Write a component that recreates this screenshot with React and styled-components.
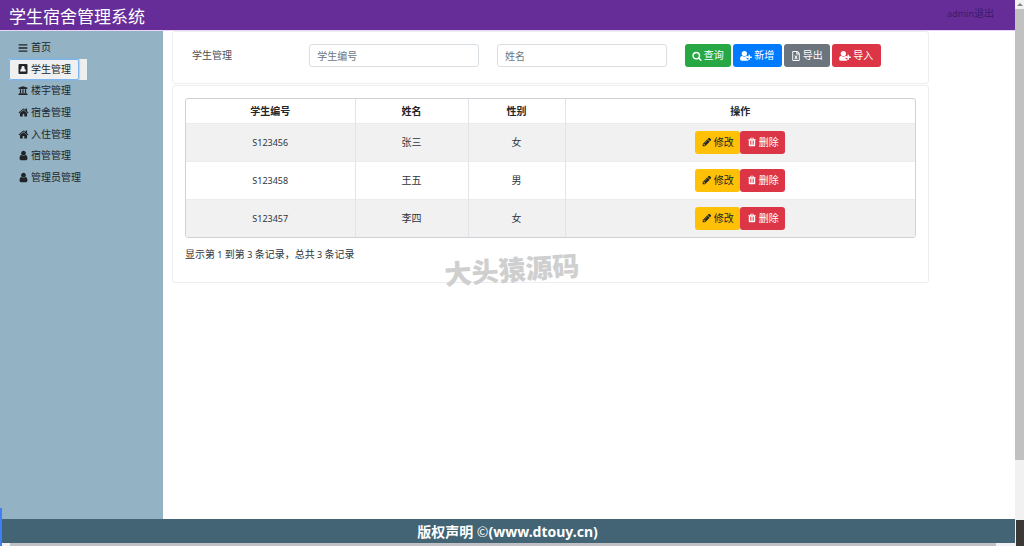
import React from "react";
import styled, { createGlobalStyle, css } from "styled-components";
import { FaBars, FaUniversity, FaRegFileExcel } from "react-icons/fa";

const GlobalStyle = createGlobalStyle`
  *, *::before, *::after { box-sizing: border-box; }
  body {
    margin: 0;
    background: #fff;
    color: #212529;
    font-family: "Noto Sans", "Noto Sans CJK SC", sans-serif;
    font-size: 10px;
    line-height: 15px;
  }
  button, input { font: inherit; }
`;

/* ---------- icons ---------- */

const Svg = styled.svg`
  width: ${(p) => p.$size || 10}px;
  height: ${(p) => p.$size || 10}px;
  fill: currentColor;
  flex: none;
`;

const glyph = (d) =>
  function Glyph({ size }) {
    return (
      <Svg viewBox="0 0 1792 1792" $size={size} aria-hidden="true">
        <path d={d} />
      </Svg>
    );
  };

const HomeIcon = glyph(
  "M1472 992v480q0 26-19 45t-45 19h-384v-384h-256v384h-384q-26 0-45-19t-19-45v-480q0-1 .5-3t.5-3l575-474 575 474q1 2 1 6zm223-69l-62 74q-8 9-21 11h-3q-13 0-21-7l-692-577-692 577q-12 8-24 7-13-2-21-11l-62-74q-8-10-7-23.5t11-21.5l719-599q32-26 76-26t76 26l244 204v-195q0-14 9-23t23-9h192q14 0 23 9t9 23v408l219 182q10 8 11 21.5t-7 23.5z"
);
const UserIcon = glyph(
  "M1536 1399q0 109-62.5 187t-150.5 78h-854q-88 0-150.5-78t-62.5-187q0-85 8.5-160.5t31.5-152 58.5-131 94-89 134.5-34.5q131 128 313 128t313-128q76 0 134.5 34.5t94 89 58.5 131 31.5 152 8.5 160.5zm-256-887q0 159-112.5 271.5t-271.5 112.5-271.5-112.5-112.5-271.5 112.5-271.5 271.5-112.5 271.5 112.5 112.5 271.5z"
);
const SearchIcon = glyph(
  "M1216 832q0-185-131.5-316.5t-316.5-131.5-316.5 131.5-131.5 316.5 131.5 316.5 316.5 131.5 316.5-131.5 131.5-316.5zm512 832q0 52-38 90t-90 38q-54 0-90-38l-343-342q-179 124-399 124-143 0-273.5-55.5t-225-150-150-225-55.5-273.5 55.5-273.5 150-225 225-150 273.5-55.5 273.5 55.5 225 150 150 225 55.5 273.5q0 220-124 399l343 343q37 37 37 90z"
);
const PencilIcon = glyph(
  "M491 1536l91-91-235-235-91 91v107h128v128h107zm523-928q0-22-22-22-10 0-17 7l-542 542q-7 7-7 17 0 22 22 22 10 0 17-7l542-542q7-7 7-17zm-54-192l416 416-832 832h-416v-416zm683 96q0 53-37 90l-166 166-416-416 166-165q36-38 90-38 53 0 91 38l235 234q37 39 37 91z"
);
const TrashIcon = glyph(
  "M704 1376v-704q0-14-9-23t-23-9h-64q-14 0-23 9t-9 23v704q0 14 9 23t23 9h64q14 0 23-9t9-23zm256 0v-704q0-14-9-23t-23-9h-64q-14 0-23 9t-9 23v704q0 14 9 23t23 9h64q14 0 23-9t9-23zm256 0v-704q0-14-9-23t-23-9h-64q-14 0-23 9t-9 23v704q0 14 9 23t23 9h64q14 0 23-9t9-23zm-544-992h448l-48-117q-7-9-17-11h-317q-10 2-17 11zm928 32v64q0 14-9 23t-23 9h-96v948q0 83-47 143.5t-113 60.5h-832q-66 0-113-58.5t-47-141.5v-952h-96q-14 0-23-9t-9-23v-64q0-14 9-23t23-9h309l70-167q15-37 54-63t79-26h320q40 0 79 26t54 63l70 167h309q14 0 23 9t9 23z"
);

const UserPlusIcon = ({ size = 12 }) => (
  <Svg viewBox="0 0 22 20" $size={size} aria-hidden="true">
    <circle cx="8" cy="5.500" r="4.800" />
    <path d="M4 9.500q4 3.500 8 0 1.500 0 2.200 1v1.500h-2v4h3.500v1.500q-1 1-2.500 1h-10q-3.200 0-3.200-3.500 0-5 4-5.500z" />
    <path d="M15.500 7.500h2.800v3.300h3.300v2.800h-3.300v3.300h-2.800v-3.300h-3.300v-2.800h3.300z" />
  </Svg>
);

const BadgeIcon = ({ size }) => (
  <Svg viewBox="0 0 20 20" $size={size} aria-hidden="true">
    <path
      fillRule="evenodd"
      d="M3 0h14q2 0 2 2v16q0 2-2 2h-14q-2 0-2-2v-16q0-2 2-2zM10 4a3.200 3.200 0 0 0-2.600 5.200q-2.900.8-2.900 4v2h11v-2q0-3.200-2.900-4a3.200 3.200 0 0 0-2.600-5.200z"
    />
  </Svg>
);

/* ---------- frame ---------- */

const Screen = styled.div`
  position: relative;
  display: grid;
  grid-template-columns: minmax(0, 1fr) 9px;
  min-height: 100vh;
`;

const Page = styled.div`
  display: flex;
  flex-direction: column;
`;

const Header = styled.header`
  display: flex;
  justify-content: space-between;
  height: 31px;
  padding: 0 21px 0 9px;
  background: #662d99;
  border-bottom: 1px solid #e9d5f5;
`;

const Title = styled.h1`
  margin: 0;
  color: #fff;
  font-size: 17px;
  font-weight: 400;
  line-height: 33px;
`;

const Account = styled.div`
  color: #3c1c66;
  line-height: 27px;
`;

const Logout = styled.a`
  color: inherit;
  text-decoration: none;
`;

const Body = styled.div`
  flex: 1;
  display: flex;
`;

const Sidebar = styled.nav`
  width: 163px;
  padding: 6px 0 0 9px;
  background: #93b2c3;
`;

const Menu = styled.ul`
  display: grid;
  grid-template-columns: minmax(0, 1fr);
  grid-auto-rows: 1fr;
  width: 78px;
  height: 151px;
  margin: 0;
  padding: 0;
  list-style: none;
`;

const MenuItem = styled.li`
  display: flex;
  background: ${(p) => (p.$active ? "#efefef" : "transparent")};
`;

const MenuLink = styled.a`
  display: flex;
  flex: none;
  align-items: center;
  gap: 3px;
  padding: 0 7px 0 8px;
  border: 1px solid transparent;
  border-radius: 2px;
  color: #212529;
  text-decoration: none;
  white-space: nowrap;
  ${(p) =>
    p.$active &&
    css`
      background: #f0f0f0;
      border-color: #80b5ec;
      box-shadow: 0 0 1px 1px rgba(128, 181, 236, 0.5);
    `}
`;

const IconSlot = styled.span`
  display: flex;
  justify-content: center;
  width: 10px;
`;

const Main = styled.main`
  flex: 1;
  display: flex;
  flex-direction: column;
  gap: 1px;
  min-width: 0;
  padding: 0 86px 0 9px;
`;

const Card = styled.section`
  border: 1px solid #eceef0;
  border-radius: 3px;
  background: #fff;
`;

/* ---------- search form ---------- */

const SearchForm = styled.form`
  display: grid;
  grid-template-columns: 2fr 3fr 3fr 4fr;
  align-items: center;
  padding: 12px 2px 16px;
`;

const Cell = styled.div`
  display: flex;
  gap: 2px;
  min-width: 0;
  padding: 0 9px;
`;

const FormTitle = styled(Cell)`
  padding-left: 17px;
  color: #495057;
`;

const TextInput = styled.input`
  width: 100%;
  height: 23px;
  padding: 0 7px;
  border: 1px solid #dadfe4;
  border-radius: 3px;
  background: #fff;
  color: #495057;
  &::placeholder { color: #6c757d; opacity: 1; }
`;

const tones = {
  success: ["#28a745", "#fff"],
  primary: ["#007bff", "#fff"],
  secondary: ["#6c757d", "#fff"],
  danger: ["#dc3545", "#fff"],
  warning: ["#ffc107", "#212529"],
};

const Button = styled.button`
  display: inline-flex;
  align-items: center;
  justify-content: center;
  gap: 2px;
  width: ${(p) => (p.$wide ? 49 : p.$row ? 45 : 46)}px;
  height: 23px;
  padding: 0;
  border: 0;
  border-radius: 3px;
  background: ${(p) => tones[p.$tone][0]};
  color: ${(p) => tones[p.$tone][1]};
  white-space: nowrap;
`;

/* ---------- table ---------- */

const ListCard = styled(Card)`
  padding: 12px 12px 20px;
`;

const TableFrame = styled.div`
  border: 1px solid #ced2d6;
  border-radius: 3px;
  overflow: hidden;
`;

const Table = styled.table`
  width: 100%;
  border-collapse: collapse;
  table-layout: fixed;
  text-align: center;
`;

const HeadCell = styled.th`
  width: ${(p) => (p.$width ? `${p.$width}px` : "auto")};
  height: 24px;
  padding: 2px 0 0;
  font-weight: 700;
  & + & { border-left: 1px solid #e2e5e8; }
`;

const Row = styled.tr`
  height: 38px;
  &:nth-child(odd) { background: #f1f1f1; }
`;

const DataCell = styled.td`
  padding: 0;
  border-top: 1px solid #eaecee;
  color: #30353a;
  & + & { border-left: 1px solid #e2e5e8; }
`;

const Latin = styled.span`
  font-size: 9px;
`;

const Actions = styled.div`
  display: flex;
  justify-content: center;
`;

const Summary = styled.p`
  margin: 9px 0 0;
  color: #30353a;
`;

/* ---------- bottom and edges ---------- */

const Footer = styled.footer`
  height: 24px;
  background: #426475;
  color: #fff;
  font-size: 14px;
  font-weight: 700;
  line-height: 25px;
  text-align: center;
`;

const Copyright = styled.span`
  font-family: "Noto Sans CJK SC", sans-serif;
  font-weight: 400;
`;

const BottomTrack = styled.div`
  display: flex;
  height: 3px;
  padding: 0 19px 0 10px;
  background: #f1f1f5;
`;

const BottomThumb = styled.div`
  flex: 1;
  background: #c1c1c5;
`;

const SideTrack = styled.div`
  display: flex;
  flex-direction: column;
  background: #f1f1f1;
`;

const ArrowUp = styled.div`
  display: flex;
  justify-content: center;
  padding-top: 3px;
  height: 9px;
  &::before {
    content: "";
    height: 3px;
    border: 3px solid transparent;
    border-top-width: 0;
    border-bottom-color: #858585;
  }
`;

const SideThumb = styled.div`
  flex: 451;
  background: #c1c1c1;
`;

const SideRest = styled.div`
  flex: 60;
`;

const SideGadget = styled.div`
  height: 26px;
  margin-left: 1px;
  background: #3b3836;
`;

const EdgeBar = styled.div`
  position: absolute;
  left: 0;
  bottom: 0;
  width: 2px;
  height: 38px;
  background: #3f80f5;
`;

const Watermark = styled.div`
  position: absolute;
  left: 50%;
  top: 250px;
  transform: translateX(-50%) rotate(-4deg);
  color: #cfcfcf;
  font-size: 27px;
  font-weight: 900;
  line-height: 40px;
  white-space: nowrap;
  pointer-events: none;
`;

const menu = [
  { label: "首页", icon: <FaBars size={10} /> },
  { label: "学生管理", icon: <BadgeIcon />, active: true },
  { label: "楼宇管理", icon: <FaUniversity size={11} /> },
  { label: "宿舍管理", icon: <HomeIcon size={11} /> },
  { label: "入住管理", icon: <HomeIcon size={11} /> },
  { label: "宿管管理", icon: <UserIcon size={11} /> },
  { label: "管理员管理", icon: <UserIcon size={11} /> },
];

const students = [
  { id: "S123456", name: "张三", sex: "女" },
  { id: "S123458", name: "王五", sex: "男" },
  { id: "S123457", name: "李四", sex: "女" },
];

export default function App() {
  return (
    <>
      <GlobalStyle />
      <Screen>
        <Page>
          <Header>
            <Title>学生宿舍管理系统</Title>
            <Account>
              <Latin>admin</Latin>
              <Logout href="#logout">退出</Logout>
            </Account>
          </Header>
          <Body>
            <Sidebar>
              <Menu>
                {menu.map((m) => (
                  <MenuItem key={m.label} $active={m.active}>
                    <MenuLink href="#" $active={m.active}>
                      <IconSlot>{m.icon}</IconSlot>
                      {m.label}
                    </MenuLink>
                  </MenuItem>
                ))}
              </Menu>
            </Sidebar>
            <Main>
              <Card>
                <SearchForm onSubmit={(e) => e.preventDefault()}>
                  <FormTitle>学生管理</FormTitle>
                  <Cell>
                    <TextInput aria-label="学生编号" placeholder="学生编号" />
                  </Cell>
                  <Cell>
                    <TextInput aria-label="姓名" placeholder="姓名" />
                  </Cell>
                  <Cell>
                    <Button type="submit" $tone="success"><SearchIcon />查询</Button>
                    <Button type="button" $tone="primary" $wide><UserPlusIcon />新增</Button>
                    <Button type="button" $tone="secondary"><FaRegFileExcel size={10} />导出</Button>
                    <Button type="button" $tone="danger" $wide><UserPlusIcon />导入</Button>
                  </Cell>
                </SearchForm>
              </Card>
              <ListCard>
                <TableFrame>
                  <Table>
                    <thead>
                      <tr>
                        <HeadCell $width={169}>学生编号</HeadCell>
                        <HeadCell $width={113}>姓名</HeadCell>
                        <HeadCell $width={97}>性别</HeadCell>
                        <HeadCell>操作</HeadCell>
                      </tr>
                    </thead>
                    <tbody>
                      {students.map((s) => (
                        <Row key={s.id}>
                          <DataCell><Latin>{s.id}</Latin></DataCell>
                          <DataCell>{s.name}</DataCell>
                          <DataCell>{s.sex}</DataCell>
                          <DataCell>
                            <Actions>
                              <Button type="button" $tone="warning" $row><PencilIcon />修改</Button>
                              <Button type="button" $tone="danger" $row><TrashIcon />删除</Button>
                            </Actions>
                          </DataCell>
                        </Row>
                      ))}
                    </tbody>
                  </Table>
                </TableFrame>
                <Summary>
                  显示第<Latin> 1 </Latin>到第<Latin> 3 </Latin>条记录，总共<Latin> 3 </Latin>条记录
                </Summary>
              </ListCard>
            </Main>
          </Body>
          <Footer>
            版权声明 <Copyright>©</Copyright>(www.dtouy.cn)
          </Footer>
          <BottomTrack><BottomThumb /></BottomTrack>
        </Page>
        <SideTrack>
          <ArrowUp />
          <SideThumb />
          <SideRest />
          <SideGadget />
        </SideTrack>
        <EdgeBar />
        <Watermark>大头猿源码</Watermark>
      </Screen>
    </>
  );
}
